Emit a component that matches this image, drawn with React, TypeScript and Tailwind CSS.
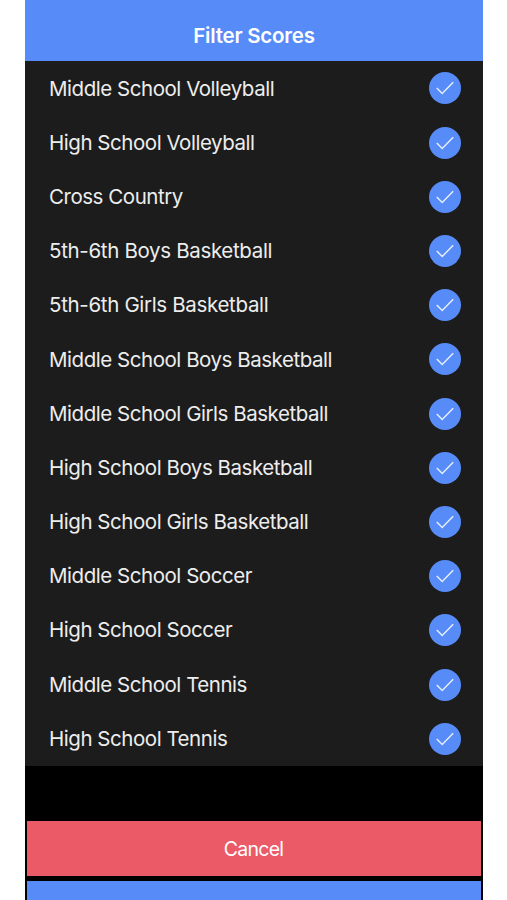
import React from 'react'
import clsx from 'clsx'

const sports = [
    { name: 'Middle School Volleyball' },
    { name: 'High School Volleyball' },
    { name: 'Cross Country' },
    { name: '5th-6th Boys Basketball', wide: true },
    { name: '5th-6th Girls Basketball', wide: true },
    { name: 'Middle School Boys Basketball' },
    { name: 'Middle School Girls Basketball' },
    { name: 'High School Boys Basketball' },
    { name: 'High School Girls Basketball' },
    { name: 'Middle School Soccer' },
    { name: 'High School Soccer' },
    { name: 'Middle School Tennis' },
    { name: 'High School Tennis' },
]

const CheckCircle = () => {
    return (
        <span className="flex size-8 items-center justify-center rounded-full bg-[#568bf8]">
            <svg viewBox="0 0 32 32" className="size-8" fill="none" stroke="#e6eeff" strokeWidth="1.5">
                <path d="M7.8 16 L13.2 21.5 L24.2 10.2" />
            </svg>
        </span>
    )
}

const App = () => {
    return (
        <div className="h-[900px] overflow-hidden bg-white pl-[25px] pr-6 font-['Inter',sans-serif]">
            <div className="flex h-full flex-col bg-black">
                <header className="flex h-[61.4px] shrink-0 items-end justify-center bg-[#568bf8] pb-[10.4px]">
                    <h1 className="text-[20.5px] font-semibold leading-[30px] tracking-[-0.22px] text-white">Filter Scores</h1>
                </header>

                <ul className="shrink-0 bg-[#1c1c1c]">
                    {sports.map(({ name, wide }) => (
                        <li key={name} className="flex h-[54.2px] items-center justify-between pl-6 pr-[22px]">
                            <span className={clsx('pt-px text-[20.5px] text-[#ededed]', wide ? 'tracking-[-0.33px]' : 'tracking-[-0.46px]')}>{name}</span>
                            <CheckCircle />
                        </li>
                    ))}
                </ul>

                <div className="mt-[55px] flex shrink-0 flex-col gap-[5px] px-[2px]">
                    <button className="h-[55px] bg-[#eb5a67] pr-px pt-[3px] text-[19.5px] tracking-[-0.7px] text-white">Cancel</button>
                    <button className="h-[55px] bg-[#568bf8]" />
                </div>
            </div>
        </div>
    )
}

export default App
